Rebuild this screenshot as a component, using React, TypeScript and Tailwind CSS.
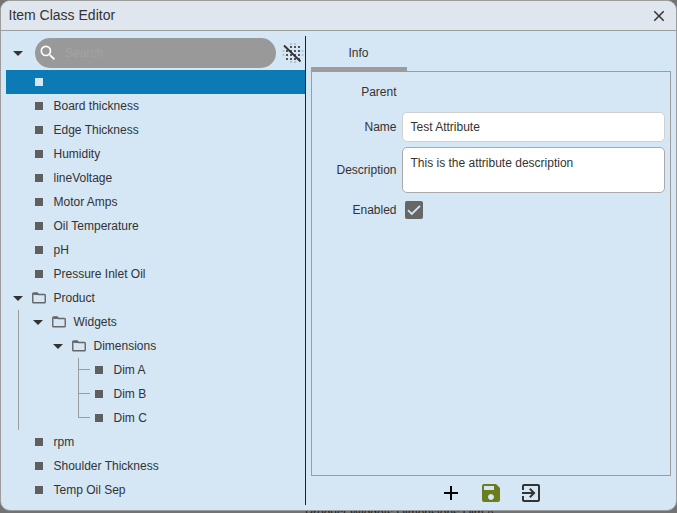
import React from "react";
import { MdClose, MdSearch, MdAdd, MdSave, MdExitToApp } from "react-icons/md";

type Node = { label: string; depth: number; folder?: boolean; selected?: boolean; last?: boolean };

const nodes: Node[] = [
  { label: "", depth: 0, selected: true },
  { label: "Board thickness", depth: 0 },
  { label: "Edge Thickness", depth: 0 },
  { label: "Humidity", depth: 0 },
  { label: "lineVoltage", depth: 0 },
  { label: "Motor Amps", depth: 0 },
  { label: "Oil Temperature", depth: 0 },
  { label: "pH", depth: 0 },
  { label: "Pressure Inlet Oil", depth: 0 },
  { label: "Product", depth: 0, folder: true },
  { label: "Widgets", depth: 1, folder: true },
  { label: "Dimensions", depth: 2, folder: true },
  { label: "Dim A", depth: 3 },
  { label: "Dim B", depth: 3 },
  { label: "Dim C", depth: 3, last: true },
  { label: "rpm", depth: 0 },
  { label: "Shoulder Thickness", depth: 0 },
  { label: "Temp Oil Sep", depth: 0 },
];

function Caret() {
  return (
    <svg width="10" height="5" viewBox="0 0 10 5" className="shrink-0">
      <path d="M0 0h10L5 5z" fill="#333" />
    </svg>
  );
}

function Folder() {
  return (
    <svg width="14" height="12" viewBox="0 0 14 12" className="shrink-0">
      <path d="M.75 10V2Q.75 1 1.7 1H5.2L6.4 2.5H12.4Q13.25 2.5 13.25 3.4V10Q13.25 10.8 12.4 10.8H1.6Q.75 10.8.75 10Z" fill="none" stroke="#666" strokeWidth="1.4" />
      <path d="M1.5 1H5l1.4 2H1.5z" fill="#666" />
    </svg>
  );
}

function BlurOff() {
  return (
    <svg width="22" height="22" viewBox="0 0 22 22" className="shrink-0">
      {[9, 13].map((p) => (
        <g key={p} fill="#b5c6d3">
          <rect x={p - 1} y="1" width="2" height="2" />
          <rect x={p - 1} y="19" width="2" height="2" />
          <rect x="0.5" y={p - 1} width="2" height="2" />
          <rect x="19.5" y={p - 1} width="2" height="2" />
        </g>
      ))}
      {[5, 9, 13, 17].map((y) =>
        [5, 9, 13, 17].map((x) =>
          x === 5 && y === 5 ? null : (
            <circle key={`${x}-${y}`} cx={x} cy={y} r="1.1" fill="#333" />
          ),
        ),
      )}
      <path d="M2 3.5l16.5 16" stroke="#333" strokeWidth="1.8" />
    </svg>
  );
}

function Row({ node }: { node: Node }) {
  const nested = node.depth > 0;
  return (
    <li className={`flex h-6 shrink-0 items-center ${node.selected ? "bg-[#0b7ab5]" : ""}`}>
      {nested && <span className="ml-3 h-6 w-px shrink-0 bg-[#9c9c9c]" />}
      {node.depth === 0 && node.folder && <span className="ml-[7px] mr-[9px] flex"><Caret /></span>}
      {node.depth === 1 && <span className="ml-[14px] mr-[9px] flex"><Caret /></span>}
      {node.depth === 2 && <span className="ml-[34px] mr-[9px] flex"><Caret /></span>}
      {node.depth === 3 && (
        <span className="ml-[59px] mr-[5px] flex h-6 w-3">
          <span className={`w-px bg-[#9c9c9c] ${node.last ? "h-3" : "h-6"}`} />
          <span className="mt-[11px] h-px w-[11px] bg-[#9c9c9c]" />
        </span>
      )}
      {node.folder ? (
        <Folder />
      ) : (
        <span className={`size-2 shrink-0 ${nested ? "" : "ml-[29px]"} ${node.selected ? "bg-[#d5e6f5]" : "bg-[#5f5f5f]"}`} />
      )}
      <span className={`whitespace-nowrap ${node.folder ? "ml-[7.5px]" : "ml-[10.5px]"}`}>{node.label}</span>
    </li>
  );
}

function Field({ label, className, children }: { label: string; className: string; children?: React.ReactNode }) {
  return (
    <div className={`flex items-center ${className}`}>
      <span className="mr-[0.5px] w-[84.5px] shrink-0 text-right">{label}</span>
      {children}
    </div>
  );
}

export default function App() {
  return (
    <div className="relative h-[513px] w-[677px] overflow-hidden bg-[#737373] font-['Liberation_Sans',Arial,sans-serif] text-xs text-[#333]">
      <span className="absolute left-[305px] top-[505px] whitespace-nowrap text-[#222]">Product.Widgets.Dimensions.Dim A</span>
      <div className="relative flex h-[511px] w-[677px] flex-col overflow-hidden rounded-[10px] border border-[#9c9c9c] bg-[#d5e6f5]">
        <header className="flex h-[30px] shrink-0 items-center justify-between border-b border-[#9c9c9c] bg-[#dfe6ed] pl-[7.5px] pr-2 text-sm">
          <h1 className="-mt-0.5">Item Class Editor</h1>
          <MdClose className="size-[18px]" />
        </header>
        <main className="flex h-[479px]">
          <aside className="mb-[5px] ml-[5px] mt-[5px] flex w-[300px] shrink-0 flex-col border-r border-[#222]">
            <div className="flex h-[34px] shrink-0 items-center pl-[7px]">
              <Caret />
              <div className="ml-3 flex h-[30px] w-[241px] items-center rounded-full bg-[#999] pl-[3px] text-[#a3a3a3]">
                <MdSearch className="size-5 text-white" />
                <span className="ml-[7px]">Search</span>
              </div>
              <span className="ml-1.5 flex"><BlurOff /></span>
            </div>
            <ul className="flex flex-col">
              {nodes.map((n, i) => <Row key={i} node={n} />)}
            </ul>
          </aside>
          <section className="ml-[5px] mt-[5px] flex w-[360px] flex-col">
            <div className="flex h-[35px] shrink-0">
              <div className="flex w-24 justify-center border-b-4 border-[#9c9c9c] pr-px pt-[9px]">Info</div>
            </div>
            <div className="h-[405px] shrink-0 border border-[#9c9c9c]">
              <Field label="Parent" className="mt-[10px] h-5" />
              <Field label="Name" className="mt-[10px] h-[30px]">
                <div className="ml-[5px] flex h-[30px] w-[263px] items-center rounded-[5px] border border-[#d0d0d0] bg-white pl-[7.5px]">Test Attribute</div>
              </Field>
              <Field label="Description" className="mt-[5px] h-[46px]">
                <div className="ml-[5px] h-[46px] w-[263px] rounded-[5px] border border-[#aaa] bg-white pl-[7.5px] pt-[7px]">This is the attribute description</div>
              </Field>
              <Field label="Enabled" className="mt-[7px] h-5">
                <svg width="18" height="18" viewBox="0 0 18 18" className="ml-2">
                  <rect width="18" height="18" rx="2" fill="#666" />
                  <path d="M3 9.2l3.8 3.8L15 4.8" fill="none" stroke="#d5e6f5" strokeWidth="1.8" />
                </svg>
              </Field>
            </div>
            <div className="flex h-[34px] items-center justify-center gap-4 text-2xl">
              <MdAdd className="text-black" />
              <MdSave className="text-[#6b7d1c]" />
              <MdExitToApp />
            </div>
          </section>
        </main>
      </div>
    </div>
  );
}
